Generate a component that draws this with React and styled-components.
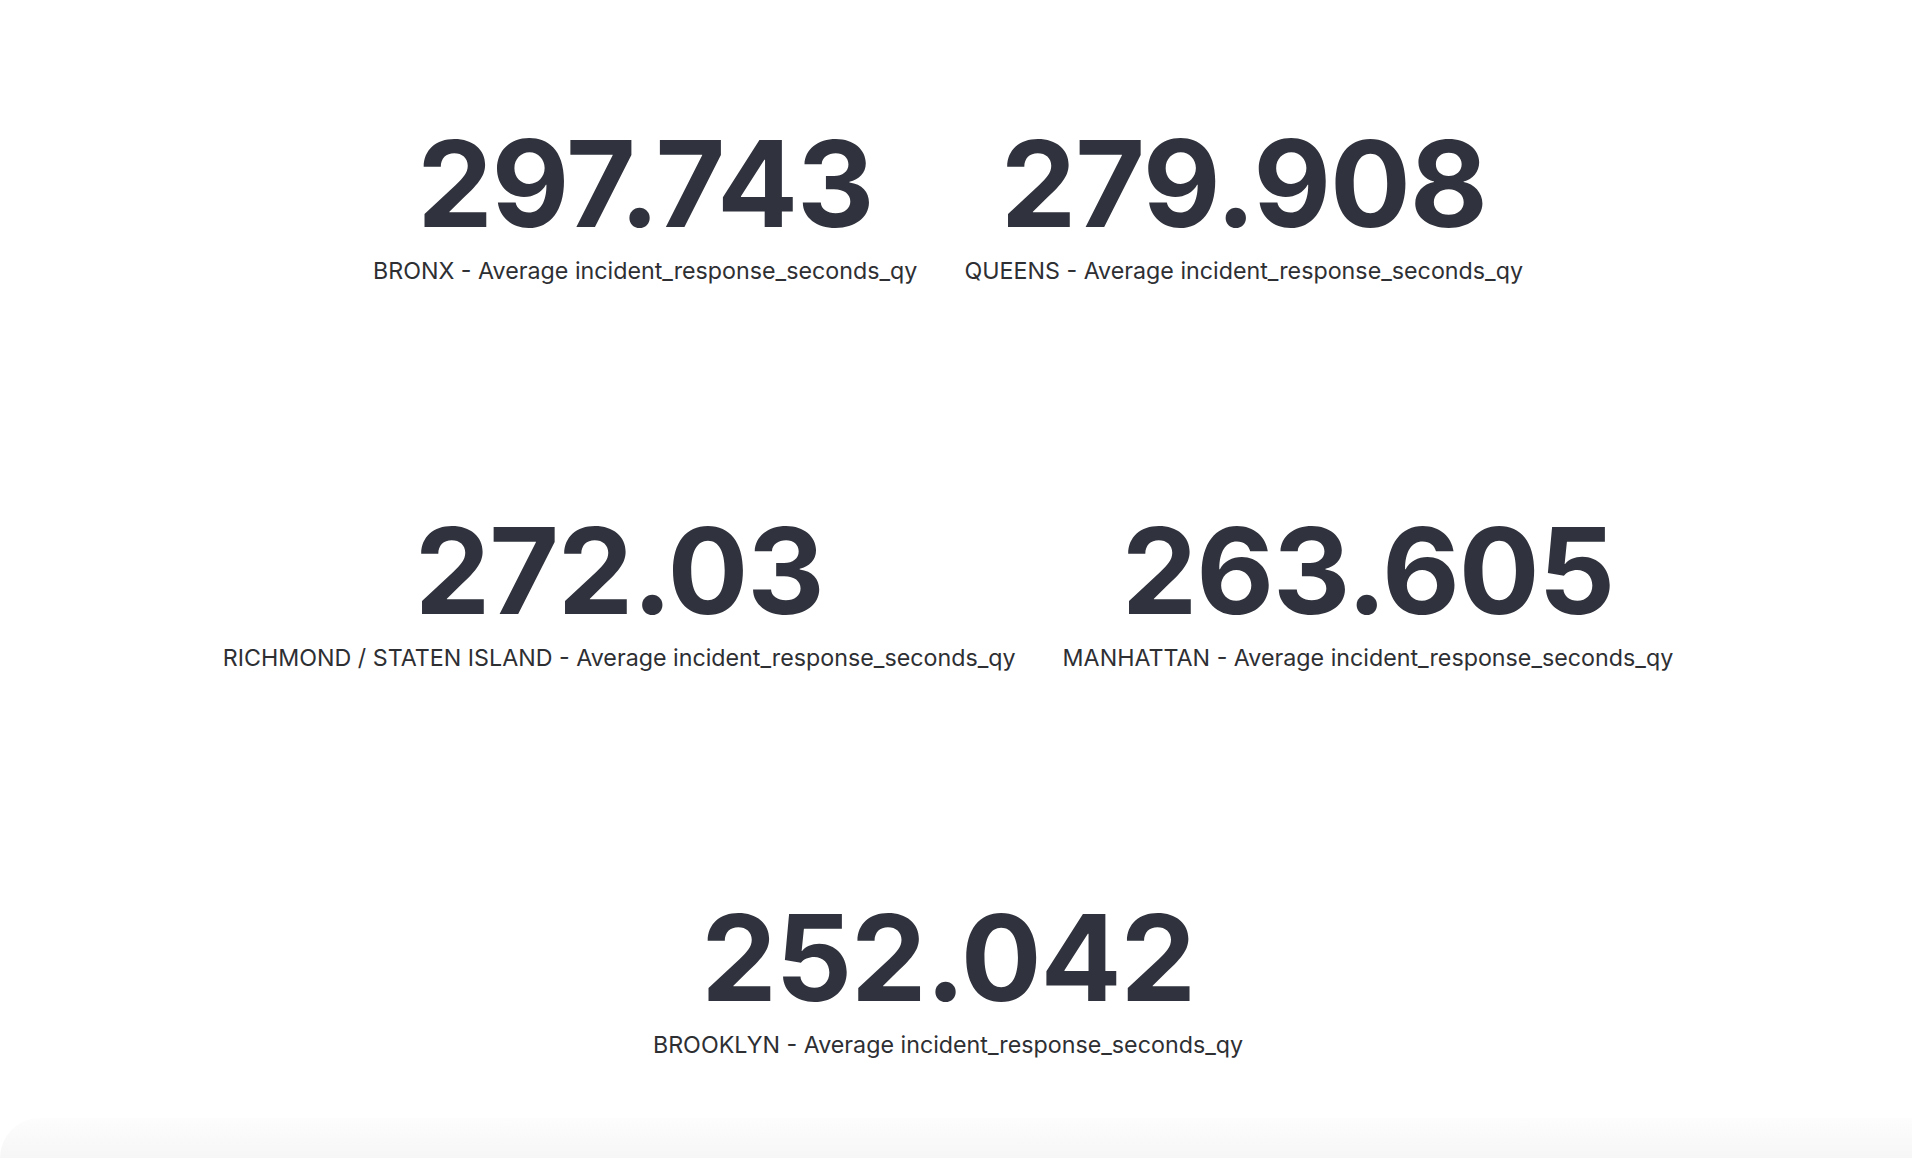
import styled, { createGlobalStyle } from "styled-components";

const GlobalStyle = createGlobalStyle`
  html, body {
    margin: 0;
    padding: 0;
    background: #fff;
  }
  body {
    font-family: 'Inter', 'Liberation Sans', sans-serif;
  }
`;

const rows = [
    [
        {value: "297.743", label: "BRONX - Average incident_response_seconds_qy"},
        {value: "279.908", label: "QUEENS - Average incident_response_seconds_qy"},
    ],
    [
        {value: "272.03", label: "RICHMOND / STATEN ISLAND - Average incident_response_seconds_qy"},
        {value: "263.605", label: "MANHATTAN - Average incident_response_seconds_qy"},
    ],
    [
        {value: "252.042", label: "BROOKLYN - Average incident_response_seconds_qy"},
    ],
];

function App() {
    return (
        <Styled.Root>
            <GlobalStyle/>
            <Styled.Board>
                {rows.map((row, i) => (
                    <Styled.Row key={i}>
                        {row.map((item) => (
                            <Styled.Scalar key={item.label}>
                                <Styled.Value>{item.value}</Styled.Value>
                                <Styled.Label>{item.label}</Styled.Label>
                            </Styled.Scalar>
                        ))}
                    </Styled.Row>
                ))}
            </Styled.Board>
            <Styled.Footer/>
        </Styled.Root>
    );
}

export default App;

const Styled = {
    Root: styled.div`
    position: relative;
    width: 100vw;
    height: 100vh;
    overflow: hidden;
    background: #fff;
    `,
    Board: styled.div`
    display: flex;
    flex-direction: column;
    gap: 220px;
    padding: 118px 16px 0 0;
    `,
    Row: styled.div`
    display: flex;
    justify-content: center;
    gap: 47px;
    `,
    Scalar: styled.div`
    display: flex;
    flex-direction: column;
    align-items: center;
    gap: 7px;
    `,
    Value: styled.div`
    font-size: 120px;
    line-height: 1.1;
    font-weight: 700;
    color: #30333d;
    letter-spacing: -1.2px;
    `,
    Label: styled.div`
    font-size: 23.25px;
    line-height: 1.2;
    font-weight: 400;
    color: #2e2f33;
    white-space: nowrap;
    `,
    Footer: styled.div`
    position: absolute;
    left: 0;
    right: 0;
    bottom: 0;
    height: 40px;
    border-top-left-radius: 40px;
    background: linear-gradient(to bottom, #fdfdfd, #f6f6f6);
    `,
}
